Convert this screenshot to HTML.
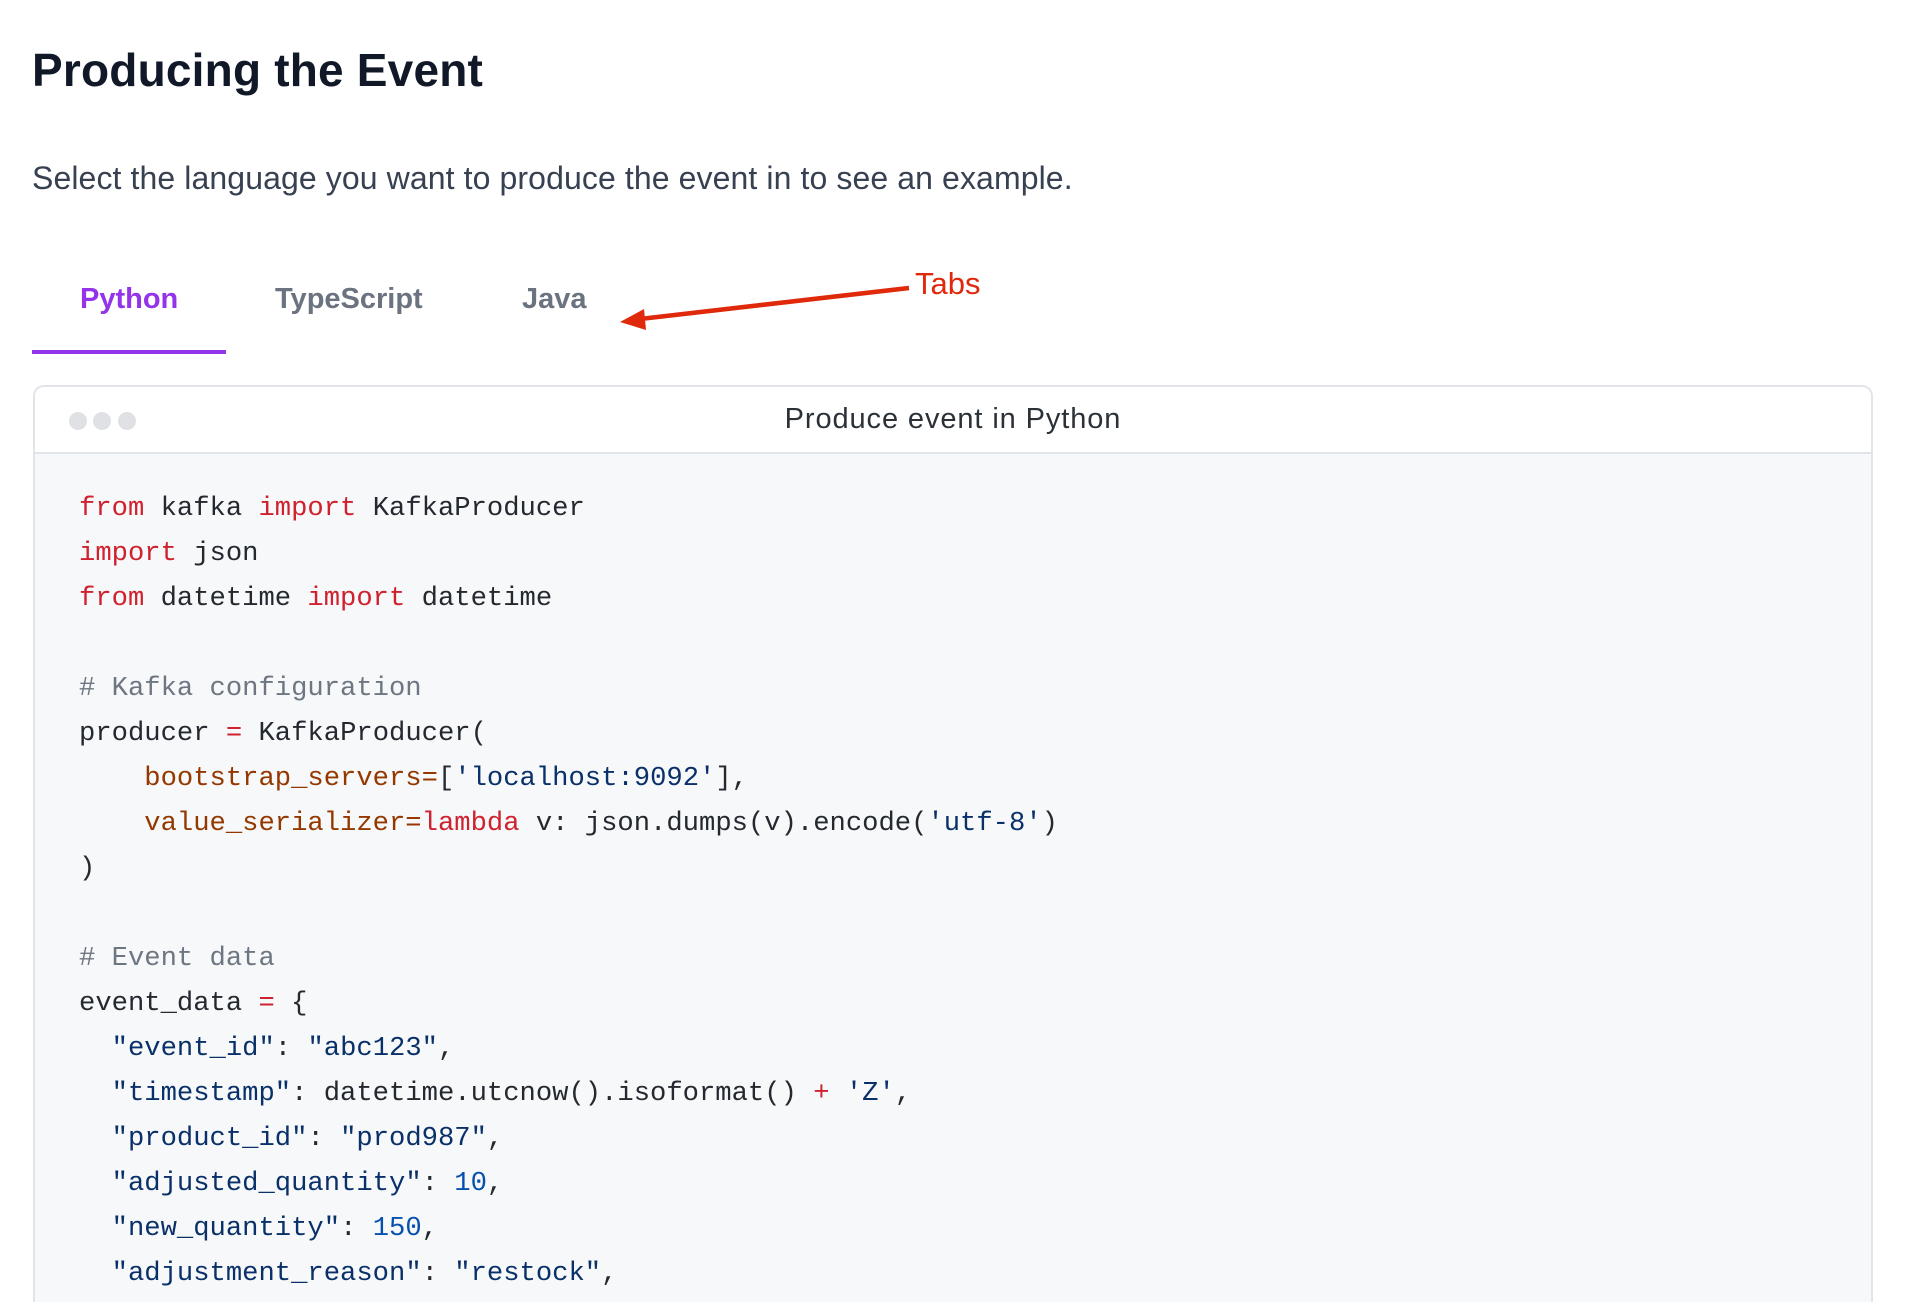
<!DOCTYPE html>
<html><head><meta charset="utf-8"><style>
*{margin:0;padding:0;box-sizing:border-box}
html,body{width:1920px;height:1302px;overflow:hidden;background:#fff}
body{font-family:"Liberation Sans",sans-serif;position:relative}
h1{position:absolute;left:32px;top:40px;font-size:46px;font-weight:bold;color:#111827;line-height:60px;letter-spacing:0.2px}
p.lead{position:absolute;left:32px;top:159px;font-size:32px;color:#374151;line-height:38px;letter-spacing:0.1px}
.tab{position:absolute;top:282px;font-size:29px;font-weight:bold;line-height:34px;color:#6b7280}
.ul{position:absolute;left:32px;top:350px;width:194px;height:4px;background:#9333ea}
.tabs-label{position:absolute;left:915px;top:266px;font-size:31px;color:#e0280a;line-height:36px}
.box{position:absolute;left:33px;top:385px;width:1840px;height:917px;border:2.5px solid #e1e4e8;border-bottom:none;border-radius:11px 11px 0 0;overflow:hidden;background:#f6f8fa}
.hdr{height:67px;background:#fff;border-bottom:2.5px solid #e1e4e8;position:relative}
.dot{position:absolute;top:25px;width:18px;height:18px;border-radius:50%;background:#dfe1e4}
.title{position:absolute;left:0;right:0;top:14px;text-align:center;font-size:29px;color:#2b3137;line-height:36px;letter-spacing:0.9px}
pre{position:absolute;left:44px;top:99px;font-family:"Liberation Mono",monospace;font-size:27.2px;line-height:45px;color:#24292f}
.k{color:#cf222e}.c{color:#6e7781}.s{color:#0a3069}.p{color:#953800}.n{color:#0550ae}
</style></head><body>
<h1>Producing the Event</h1>
<p class="lead">Select the language you want to produce the event in to see an example.</p>
<div class="tab" style="left:80px;color:#9333ea">Python</div>
<div class="tab" style="left:275px">TypeScript</div>
<div class="tab" style="left:522px">Java</div>
<div class="ul"></div>
<svg style="position:absolute;left:0;top:0" width="1920" height="400">
<line x1="909" y1="288" x2="640" y2="319" stroke="#e0280a" stroke-width="4.5"/>
<polygon points="620,322 644,309 646,330" fill="#e0280a"/>
</svg>
<div class="tabs-label">Tabs</div>
<div class="box">
<div class="hdr">
<div class="dot" style="left:34px"></div><div class="dot" style="left:58px"></div><div class="dot" style="left:83px"></div>
<div class="title">Produce event in Python</div>
</div>
<pre><span class="k">from</span> kafka <span class="k">import</span> KafkaProducer
<span class="k">import</span> json
<span class="k">from</span> datetime <span class="k">import</span> datetime

<span class="c"># Kafka configuration</span>
producer <span class="k">=</span> KafkaProducer(
    <span class="p">bootstrap_servers=</span>[<span class="s">'localhost:9092'</span>],
    <span class="p">value_serializer=</span><span class="k">lambda</span> v: json.dumps(v).encode(<span class="s">'utf-8'</span>)
)

<span class="c"># Event data</span>
event_data <span class="k">=</span> {
  <span class="s">"event_id"</span>: <span class="s">"abc123"</span>,
  <span class="s">"timestamp"</span>: datetime.utcnow().isoformat() <span class="k">+</span> <span class="s">'Z'</span>,
  <span class="s">"product_id"</span>: <span class="s">"prod987"</span>,
  <span class="s">"adjusted_quantity"</span>: <span class="n">10</span>,
  <span class="s">"new_quantity"</span>: <span class="n">150</span>,
  <span class="s">"adjustment_reason"</span>: <span class="s">"restock"</span>,</pre>
</div>
</body></html>
